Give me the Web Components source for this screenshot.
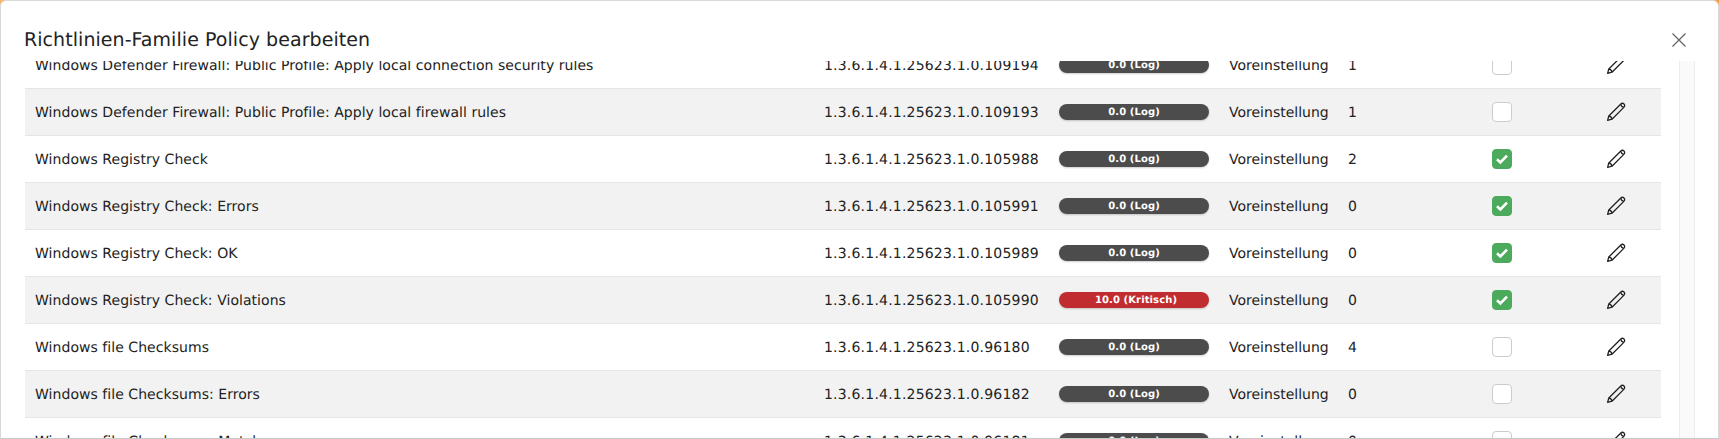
<!DOCTYPE html>
<html lang="de"><head><meta charset="utf-8"><title>Richtlinien-Familie</title>
<style>
html,body{margin:0;padding:0;height:439px;overflow:hidden;background:#d9d9d9}
body{font-family:"DejaVu Sans",sans-serif;color:#222;text-rendering:geometricPrecision}
.glow{height:439px;background:linear-gradient(90deg,#f8b26a 0,#f8b26a 6px,#d8d8d8 6px,#d8d8d8 1712px,#f0a040 1712px)}
</style></head><body>
<div class="glow">
<policy-dialog heading="Richtlinien-Familie Policy bearbeiten">
<nvt-row name="Windows Defender Firewall: Public Profile: Apply local connection security rules" oid="1.3.6.1.4.1.25623.1.0.109194" sev="0.0 (Log)" count="1"></nvt-row>
<nvt-row alt name="Windows Defender Firewall: Public Profile: Apply local firewall rules" oid="1.3.6.1.4.1.25623.1.0.109193" sev="0.0 (Log)" count="1"></nvt-row>
<nvt-row name="Windows Registry Check" oid="1.3.6.1.4.1.25623.1.0.105988" sev="0.0 (Log)" count="2" checked></nvt-row>
<nvt-row alt name="Windows Registry Check: Errors" oid="1.3.6.1.4.1.25623.1.0.105991" sev="0.0 (Log)" count="0" checked></nvt-row>
<nvt-row name="Windows Registry Check: OK" oid="1.3.6.1.4.1.25623.1.0.105989" sev="0.0 (Log)" count="0" checked></nvt-row>
<nvt-row alt name="Windows Registry Check: Violations" oid="1.3.6.1.4.1.25623.1.0.105990" sev="10.0 (Kritisch)" high count="0" checked></nvt-row>
<nvt-row name="Windows file Checksums" oid="1.3.6.1.4.1.25623.1.0.96180" sev="0.0 (Log)" count="4"></nvt-row>
<nvt-row alt name="Windows file Checksums: Errors" oid="1.3.6.1.4.1.25623.1.0.96182" sev="0.0 (Log)" count="0"></nvt-row>
<nvt-row name="Windows file Checksums: Matches" oid="1.3.6.1.4.1.25623.1.0.96181" sev="0.0 (Log)" count="0"></nvt-row>
</policy-dialog>
</div>
<script>
class PolicyDialog extends HTMLElement{
  connectedCallback(){
    if(this.shadowRoot)return;
    const r=this.attachShadow({mode:'open'});
    r.innerHTML=`<style>
    :host{display:block;height:439px;box-sizing:border-box;background:#fff;border:1px solid #d9d9d9;border-bottom-color:#c8c8c8;border-radius:6px 6px 0 0;overflow:hidden}
    .head{display:flex;align-items:center;justify-content:space-between;height:60px;box-sizing:border-box;padding:17px 32px 0 23px}
    h2{margin:0;font-weight:400;font-size:19px;line-height:24px;letter-spacing:.06px;color:#222}
    button{all:unset;display:flex;width:14px;height:14px;margin-top:0}
    .content{display:flex;gap:18px;height:377px;padding-left:24px;overflow:hidden}
    .rows{width:1636px;flex:none;margin-top:-19px}
    .track{width:14px;flex:none;background:#fafafa;border:solid #ededed;border-width:0 1px}
    </style>
    <div class="head"><h2></h2><button aria-label="Schließen"><svg width="14" height="14" viewBox="0 0 14 14"><path d="M.5 .5L13.500 13.500M13.500 .5L.5 13.500" stroke="#666" stroke-width="1.3" fill="none"/></svg></button></div>
    <div class="content"><div class="rows"><slot></slot></div><div class="track"></div></div>`;
    r.querySelector('h2').textContent=this.getAttribute('heading');
  }
}
class NvtRow extends HTMLElement{
  connectedCallback(){
    if(this.shadowRoot)return;
    const r=this.attachShadow({mode:'open'});
    const checked=this.hasAttribute('checked');
    r.innerHTML=`<style>
    :host{display:grid;grid-template-columns:789px 235px 170px 119px 105px 118px 100px;align-items:center;height:47px;box-sizing:border-box;border-bottom:1px solid #e5e5e5;font-size:14px;color:#222;background:#fff}
    :host([alt]){background:#f2f2f2}
    .c{padding-left:10px;white-space:nowrap;padding-top:2px}
    .name{letter-spacing:.05px}
    .oid{letter-spacing:.2px}
    .bar{margin:0 10px;height:16px;border-radius:8px;background:#4c4c4c;color:#fff;font-size:10px;font-weight:700;text-align:center;line-height:17.500px;box-shadow:0 1px 2px rgba(0,0,0,.2);letter-spacing:.1px}
    :host([high]) .bar{background:#c12c30;padding-left:4px;box-sizing:border-box}
    .box{justify-self:center;width:20px;height:20px;box-sizing:border-box;border-radius:4px;background:#fff;border:1px solid #ccc;display:flex;align-items:center;justify-content:center}
    .box.on{background:#4caa5c;border-color:#4caa5c}
    .edit{justify-self:center;margin-left:10px;display:flex}
    </style>
    <div class="c name"></div><div class="c oid"></div><div class="bar"></div><div class="c">Voreinstellung</div><div class="c count"></div>
    <div class="box ${checked?'on':''}">${checked?'<svg width="14" height="12" viewBox="0 0 14 12"><path d="M2 6.2L5.4 9.4L12 2.6" stroke="#fff" stroke-width="2.6" fill="none"/></svg>':''}</div>
    <div class="edit"><svg width="20" height="20" viewBox="0 0 20 20" fill="none" stroke="#222" stroke-width="1.3" stroke-linejoin="round"><path d="M1.6 18.4L2.8 14 14.6 2.2C15.6 1.2 17 1 18 2S18.8 4.400 17.800 5.400L6 17.200Z"/><path d="M14.600 2.200C15 4 16 5 17.800 5.400M2.800 14C4.500 14.300 5.700 15.500 6 17.200"/></svg></div>`;
    r.querySelector('.name').textContent=this.getAttribute('name');
    r.querySelector('.oid').textContent=this.getAttribute('oid');
    r.querySelector('.bar').textContent=this.getAttribute('sev');
    r.querySelector('.count').textContent=this.getAttribute('count');
  }
}
customElements.define('policy-dialog',PolicyDialog);
customElements.define('nvt-row',NvtRow);
</script>
</body></html>
